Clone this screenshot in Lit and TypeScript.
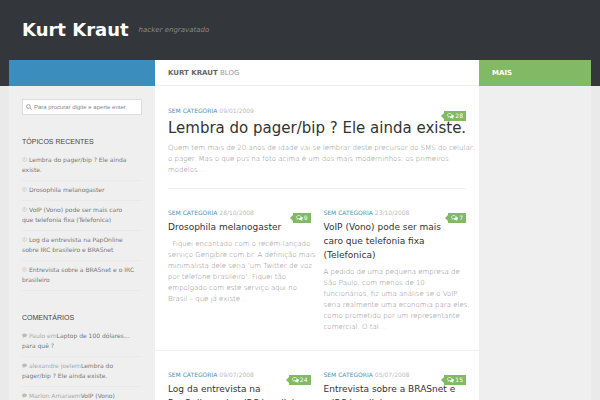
import { LitElement, html, css, svg } from "lit";
import { customElement, property } from "lit/decorators.js";

interface Post {
  date: string;
  title: string[];
  excerpt: string[];
  comments: number;
}

const lines = (parts: string[]) => parts.map((p, i) => (i ? html`<br />${p}` : p));

const featured: Post = {
  date: "09/01/2009",
  title: ["Lembra do pager/bip ? Ele ainda existe."],
  excerpt: [
    "Quem tem mais de 20 anos de idade vai se lembrar deste precursor do SMS do celular:",
    "o pager. Mas o que pus na foto acima é um dos mais moderninhos: os primeiros",
    "modelos...",
  ],
  comments: 28,
};

const rows: Post[][] = [
  [
    {
      date: "28/10/2008",
      title: ["Drosophila melanogaster"],
      excerpt: [
        "\u00a0 Fiquei encantado com o recém-lançado",
        "serviço Gengibre.com.br. A definição mais",
        "minimalista dele seria ‘um Twitter de voz",
        "por telefone brasileiro’. Fiquei tão",
        "empolgado com este serviço aqui no",
        "Brasil – que já existe...",
      ],
      comments: 9,
    },
    {
      date: "23/10/2008",
      title: ["VoIP (Vono) pode ser mais", "caro que telefonia fixa", "(Telefonica)"],
      excerpt: [
        "A pedido de uma pequena empresa de",
        "São Paulo, com menos de 10",
        "funcionários, fiz uma análise se o VoIP",
        "seria realmente uma economia para eles,",
        "como prometido por um representante",
        "comercial. O tal...",
      ],
      comments: 7,
    },
  ],
  [
    {
      date: "09/07/2008",
      title: ["Log da entrevista na", "PapOnline sobre IRC brasileiro"],
      excerpt: [],
      comments: 24,
    },
    {
      date: "05/07/2008",
      title: ["Entrevista sobre a BRASnet e", "o IRC brasileiro"],
      excerpt: [],
      comments: 15,
    },
  ],
];

const recent = [
  ["Lembra do pager/bip ? Ele ainda", "existe."],
  ["Drosophila melanogaster"],
  ["VoIP (Vono) pode ser mais caro", "que telefonia fixa (Telefonica)"],
  ["Log da entrevista na PapOnline", "sobre IRC brasileiro e BRASnet"],
  ["Entrevista sobre a BRASnet e o IRC", "brasileiro"],
];

const comments: { who: string; text: string[] }[] = [
  { who: "Paulo em", text: ["Laptop de 100 dólares...", "para quê ?"] },
  { who: "alexandre joelem", text: ["Lembra do", "pager/bip ? Ele ainda existe."] },
  { who: "Marlon Amaraem", text: ["VoIP (Vono)"] },
];

@customElement("post-card")
class PostCard extends LitElement {
  @property({ attribute: false }) post!: Post;
  @property({ type: Boolean, reflect: true }) large = false;

  static styles = css`
    :host {
      display: block;
      position: relative;
      min-width: 0;
    }
    a {
      color: inherit;
      text-decoration: none;
    }
    .meta {
      font-size: 6px;
      line-height: 10px;
      color: #bbb;
      white-space: nowrap;
    }
    .category {
      color: #4a93ba;
    }
    .title {
      margin: 2px 0 5px;
      font-size: 9px;
      line-height: 14px;
      font-weight: 400;
      color: #333;
      white-space: nowrap;
    }
    :host([large]) .title {
      font-size: 15px;
      line-height: 20px;
    }
    .excerpt {
      margin: 0;
      font-size: 7px;
      line-height: 11px;
      font-weight: 300;
      color: #888;
      white-space: nowrap;
    }
    .count {
      position: absolute;
      top: 5px;
      right: 0;
      display: flex;
      align-items: center;
      gap: 1px;
      height: 10px;
      padding: 0 3px;
      background: #82b965;
      color: #fff;
      font-size: 6px;
      line-height: 10px;
    }
    .count::before {
      content: "";
      position: absolute;
      right: 100%;
      border: solid transparent;
      border-width: 3px 3px 3px 0;
      border-right-color: #82b965;
    }
    .bubbles {
      width: 7px;
      height: 6px;
    }
  `;

  render() {
    const p = this.post;
    return html`
      <div class="meta"><a class="category" href="#">SEM CATEGORIA</a> ${p.date}</div>
      <h2 class="title"><a href="#">${lines(p.title)}</a></h2>
      <p class="excerpt">${lines(p.excerpt)}</p>
      <a class="count" href="#">
        <svg class="bubbles" viewBox="0 0 14 12" fill="none" stroke="#fff" stroke-width="1.4">
          <path d="M5.5 1C3 1 1 2.4 1 4.2c0 1 .6 1.9 1.5 2.5L2 8.5l2.3-1.2C7.5 7.7 10 6.3 10 4.2 10 2.4 8 1 5.5 1z" />
          <path d="M11.5 4.2c1 .5 1.600 1.3 1.600 2.2 0 .9-.5 1.600-1.400 2.200l.6 2-2.400-1.400c-1.500.2-3-.1-4-.8" fill="#fff" />
        </svg>
        ${p.comments}
      </a>
    `;
  }
}

@customElement("app-root")
class AppRoot extends LitElement {
  static styles = css`
    :host {
      display: block;
      height: 100vh;
      overflow: hidden;
      background: #eaeaea;
      font-family: "DejaVu Sans", sans-serif;
      color: #666;
    }
    a {
      color: #777;
      text-decoration: none;
    }
    .header {
      display: flex;
      align-items: center;
      box-sizing: border-box;
      height: 86px;
      padding: 0 22px 26px;
      gap: 10px;
      background: #33363b;
    }
    .brand {
      margin: 0;
      font-size: 18px;
      line-height: 26px;
    }
    .brand a {
      color: #fff;
    }
    .tagline {
      margin: 0;
      font-size: 7px;
      font-style: italic;
      font-weight: 300;
      color: #888;
    }
    .page {
      display: grid;
      grid-template-columns: 146px 1fr 112px;
      margin: -26px 9px 0;
      min-height: calc(100vh - 60px);
      background: #efefef;
    }
    .bar {
      box-sizing: border-box;
      height: 26px;
      padding: 0 13px;
      font-size: 7px;
      line-height: 26px;
    }
    .bar.blue {
      background: #3b8dbd;
    }
    .bar.green {
      background: #82b965;
      color: #fff;
      font-weight: 700;
    }
    .bar.white {
      border-bottom: 1px solid #eee;
      color: #999;
    }
    .bar b {
      font-weight: 700;
      color: #666;
    }
    .main {
      background: #fff;
      min-width: 0;
    }
    .posts {
      padding: 20px 13px 0;
    }
    .row {
      display: grid;
      grid-template-columns: 1fr 1fr;
      column-gap: 13px;
      padding: 19px 13px 17px;
      border-bottom: 1px solid #f0f0f0;
    }
    .lead {
      padding-bottom: 12px;
      border-bottom: 1px solid #eee;
    }
    .widgets {
      padding: 13px;
      font-size: 6px;
    }
    .search {
      display: flex;
      align-items: center;
      gap: 2px;
      box-sizing: border-box;
      height: 16px;
      padding: 0 3px;
      border: 1px solid #ddd;
      background: #fff;
    }
    .search svg {
      width: 6px;
      height: 6px;
      flex: none;
    }
    .search input {
      flex: 1;
      min-width: 0;
      padding: 0;
      border: 0;
      outline: 0;
      font: 6px "Liberation Sans", sans-serif;
    }
    .search input::placeholder {
      color: #888;
    }
    h3 {
      margin: 22px 0 4px;
      font-family: "Liberation Sans", sans-serif;
      font-size: 7px;
      line-height: 10px;
      font-weight: 400;
      color: #444;
    }
    ul {
      margin: 0;
      padding: 0;
      list-style: none;
    }
    li {
      padding: 4px 0 5px;
      line-height: 10px;
      border-bottom: 1px solid #e9e9e9;
      white-space: nowrap;
      color: #aaa;
    }
    li svg {
      width: 5px;
      height: 5px;
      margin-right: 2px;
    }
  `;

  private clock = svg`<svg viewBox="0 0 10 10" fill="none" stroke="#ccc" stroke-width="1.4"><circle cx="5" cy="5" r="4" /><path d="M5 2.5V5.5H3.5" /></svg>`;
  private bubble = svg`<svg viewBox="0 0 10 10" fill="#bbb"><path d="M5 1C2.2 1 0 2.6 0 4.7c0 1.2.8 2.2 2 2.9L1.2 9.5l3-1.2C7.5 8.6 10 7 10 4.7 10 2.6 7.8 1 5 1z" /></svg>`;

  render() {
    return html`
      <header class="header">
        <h1 class="brand"><a href="#">Kurt Kraut</a></h1>
        <p class="tagline">hacker engravatado</p>
      </header>
      <div class="page">
        <aside>
          <div class="bar blue"></div>
          <div class="widgets">
            <label class="search">
              <svg viewBox="0 0 12 12" fill="none" stroke="#888" stroke-width="1.5">
                <circle cx="5" cy="5" r="3.8" />
                <path d="M8 8l3.5 3.5" />
              </svg>
              <input type="text" aria-label="Procurar" placeholder="Para procurar digite e aperte enter" />
            </label>
            <h3>TÓPICOS RECENTES</h3>
            <ul>
              ${recent.map((r) => html`<li>${this.clock}<a href="#">${lines(r)}</a></li>`)}
            </ul>
            <h3>COMENTÁRIOS</h3>
            <ul>
              ${comments.map((c) => html`<li>${this.bubble}${c.who}<a href="#">${lines(c.text)}</a></li>`)}
            </ul>
          </div>
        </aside>
        <main class="main">
          <div class="bar white"><b>KURT KRAUT</b> BLOG</div>
          <div class="posts">
            <post-card class="lead" large .post=${featured}></post-card>
          </div>
          ${rows.map(
            (row) => html`<div class="row">${row.map((p) => html`<post-card .post=${p}></post-card>`)}</div>`
          )}
        </main>
        <aside>
          <div class="bar green">MAIS</div>
        </aside>
      </div>
    `;
  }
}
